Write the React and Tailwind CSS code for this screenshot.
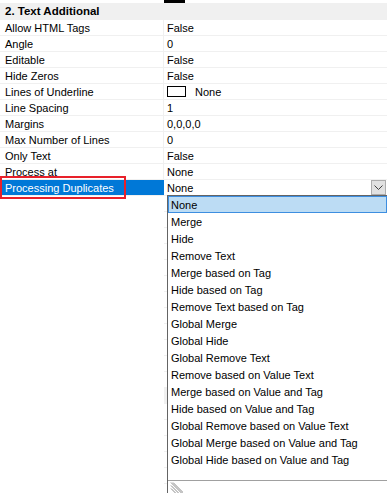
import React from "react";

const rows = [
  ["Allow HTML Tags", "False"],
  ["Angle", "0"],
  ["Editable", "False"],
  ["Hide Zeros", "False"],
  ["Lines of Underline", "underline"],
  ["Line Spacing", "1"],
  ["Margins", "0,0,0,0"],
  ["Max Number of Lines", "0"],
  ["Only Text", "False"],
  ["Process at", "None"],
];

const options = [
  "None",
  "Merge",
  "Hide",
  "Remove Text",
  "Merge based on Tag",
  "Hide based on Tag",
  "Remove Text based on Tag",
  "Global Merge",
  "Global Hide",
  "Global Remove Text",
  "Remove based on Value Text",
  "Merge based on Value and Tag",
  "Hide based on Value and Tag",
  "Global Remove based on Value Text",
  "Global Merge based on Value and Tag",
  "Global Hide based on Value and Tag",
];

function Row({ label, children, selected }) {
  return (
    <div className="flex h-[16px] border-b border-[#f0f0f0] leading-[16px]">
      <div
        className={
          selected
            ? "w-[164px] pl-[5px] bg-[#0078d7] text-white"
            : "w-[164px] pl-[5px] border-r border-[#f0f0f0]"
        }
      >
        {label}
      </div>
      <div className="relative flex-1 pl-[3px]">{children}</div>
    </div>
  );
}

export default function App() {
  const empty = Array.from({ length: 19 }, (_, i) => i);

  return (
    <div
      className="relative w-[387px] h-[493px] overflow-hidden bg-white text-[11px] leading-[15px] text-black"
      style={{ fontFamily: '"Liberation Sans", Arial, sans-serif' }}
    >
      <div className="h-[3px]">
        <div className="ml-[164px] w-[21px] h-[3px] bg-black" />
      </div>
      <div className="h-[17px] bg-[#f0f0f0] pl-[5px] pt-[1px] font-bold text-[11.5px]">
        2. Text Additional
      </div>

      {rows.map(([label, value]) => (
        <Row key={label} label={label}>
          {value === "underline" ? (
            <div className="flex items-center h-[15px]">
              <div className="w-[19px] h-[11px] border border-black bg-white" />
              <span className="ml-[9px]">None</span>
            </div>
          ) : (
            value
          )}
        </Row>
      ))}

      <Row label="Processing Duplicates" selected>
        None
        <div className="absolute right-[1px] top-0 w-[15px] h-[15px] border border-[#adadad] bg-[#e1e1e1] flex items-center justify-center">
          <svg width="9" height="5" viewBox="0 0 9 5">
            <path d="M0.5 0.5 L4.5 4.5 L8.5 0.5" fill="none" stroke="#404040" strokeWidth="1" />
          </svg>
        </div>
      </Row>

      {empty.map((i) => (
        <div key={i} className="flex h-[16px]">
          <div className="w-[164px]" />
          <div
            className={
              i === 12
                ? "flex-1 bg-[#f0f0f0] border-b border-[#f0f0f0]"
                : "flex-1 border-b border-[#f0f0f0]"
            }
          />
        </div>
      ))}

      {/* selection outline */}
      <div className="absolute left-0 top-[176px] w-[126px] h-[23px] border-2 border-[#e8202a]" />

      {/* open dropdown list */}
      <div className="absolute left-[167px] top-[195px] right-0 bottom-0 bg-white border-l border-t border-[#646464] flex flex-col">
        <div className="h-[285px]">
          {options.map((opt, i) => (
            <div
              key={opt}
              className={
                i === 0
                  ? "h-[17px] pt-[1px] leading-[15px] pl-[2px] bg-[#bcdcf4] border border-[#3d8ee0]"
                  : "h-[17px] pt-[2px] leading-[15px] pl-[3px]"
              }
            >
              {opt}
            </div>
          ))}
        </div>
        <div className="flex-1 border-t border-[#a0a0a0] pl-[2px] pt-[1px]">
          <svg width="13" height="11" viewBox="0 0 13 11">
            <path
              d="M1 0.5 L11.5 11 M1 3.5 L8.5 11 M1 6.5 L5.5 11 M3 0.5 L13.5 11"
              fill="none"
              stroke="#8a8a8a"
              strokeWidth="1"
            />
          </svg>
        </div>
      </div>
    </div>
  );
}
